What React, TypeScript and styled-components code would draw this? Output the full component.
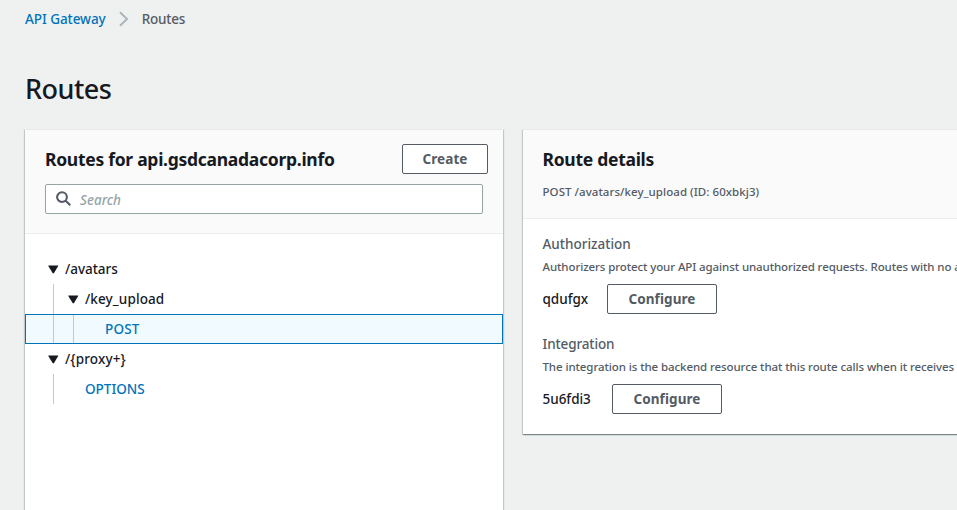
import React from "react";
import styled, { createGlobalStyle } from "styled-components";

const GlobalStyle = createGlobalStyle`
  *, *::before, *::after { box-sizing: border-box; }
  html, body { margin: 0; height: 100%; overflow: hidden; }
  body {
    background: #eff1f1;
    color: #16191f;
    font-family: "Noto Sans", "Open Sans", sans-serif;
    font-size: 13.5px;
    font-weight: 500;
    line-height: 20px;
  }
`;

const Page = styled.div`
  width: 957px;
  height: 510px;
  overflow: hidden;
  padding: 9px 0 0 25px;
  white-space: nowrap;
`;

const Breadcrumbs = styled.nav`
  display: flex;
  align-items: center;
  height: 20px;
`;

const Crumb = styled.a<{ $current?: boolean }>`
  color: ${(p) => (p.$current ? "#545b64" : "#0073bb")};
  letter-spacing: ${(p) => (p.$current ? "-0.22px" : "-0.06px")};
`;

const Separator = styled.svg`
  width: 10px;
  height: 16px;
  margin: 0 13px 0 13px;
`;

const PageTitle = styled.h1`
  margin: 42px 0 0;
  height: 35px;
  font-size: 27px;
  line-height: 36px;
  font-weight: 500;
  letter-spacing: -0.5px;
`;

const Columns = styled.div`
  display: flex;
  gap: 20px;
  margin-top: 23px;
  align-items: flex-start;
`;

const Card = styled.section<{ $tall?: boolean }>`
  flex: none;
  width: ${(p) => (p.$tall ? "478px" : "480px")};
  height: ${(p) => (p.$tall ? "420px" : "305px")};
  background: #fff;
  border-top: 1px solid #e6eaea;
  box-shadow: 0 1px 1px 0 rgba(0, 28, 36, 0.3), 1px 1px 1px 0 rgba(0, 28, 36, 0.15),
    -1px 1px 1px 0 rgba(0, 28, 36, 0.15);
`;

const CardHeader = styled.header<{ $height: number; $inset: number }>`
  height: ${(p) => p.$height}px;
  padding: 14px 15px 0 ${(p) => p.$inset}px;
  background: #fafafa;
  border-bottom: 1px solid #eaeded;
`;

const HeaderRow = styled.div`
  display: flex;
  align-items: center;
  justify-content: space-between;
  height: 30px;
`;

const CardTitle = styled.h2`
  margin: 0;
  font-size: 17.5px;
  line-height: 22px;
  font-weight: 700;
  letter-spacing: -0.28px;
`;

const Subtitle = styled.p`
  margin: 10px 0 0;
  color: #545b64;
  font-size: 11.5px;
  font-weight: 500;
  line-height: 16px;
  letter-spacing: 0.05px;
`;

const Button = styled.button<{ $width: number }>`
  width: ${(p) => p.$width}px;
  height: 30px;
  padding: 0;
  border: 1px solid #545b64;
  border-radius: 2px;
  background: #fff;
  color: #545b64;
  font: 700 13.5px/20px "Noto Sans", "Open Sans", sans-serif;
  letter-spacing: 0.08px;
`;

const SearchBox = styled.label`
  display: flex;
  align-items: center;
  width: 438px;
  height: 30px;
  margin-top: 10px;
  padding-left: 10px;
  border: 1px solid #95a5a6;
  border-radius: 2px;
  background: #fff;
`;

const SearchIcon = styled.svg`
  width: 16px;
  height: 16px;
`;

const SearchInput = styled.input`
  flex: 1;
  min-width: 0;
  margin: 1px 0 0 8px;
  padding: 0;
  border: 0;
  outline: 0;
  background: transparent;
  font: italic 500 13.5px/20px "Noto Sans", "Open Sans", sans-serif;
  letter-spacing: 0;
  &::placeholder { color: #95a5a6; opacity: 1; }
`;

const Tree = styled.ul`
  margin: 20px 0 0;
  padding: 0;
  list-style: none;
`;

const TreeRow = styled.li<{ $selected?: boolean }>`
  display: flex;
  align-items: center;
  height: 30px;
  padding-left: ${(p) => (p.$selected ? "7px" : "8px")};
  border: ${(p) => (p.$selected ? "1px solid #0073bb" : "0")};
  background: ${(p) => (p.$selected ? "#f1faff" : "transparent")};
`;

const Guides = styled.span<{ $depth: number }>`
  display: flex;
  align-self: stretch;
  width: ${(p) => p.$depth * 20}px;
  margin-left: 20px;
  margin-right: -20px;
`;

const Guide = styled.span`
  width: 20px;
  border-left: 1px solid #c8c8c8;
`;

const LeafSpacer = styled.span`
  width: 32px;
`;

const Caret = styled.svg`
  width: 11px;
  height: 9px;
  margin: 0 6px 0 15px;
`;

const RouteName = styled.span<{ $track: number; $link?: boolean }>`
  color: ${(p) => (p.$link ? "#0073bb" : "#16191f")};
  letter-spacing: ${(p) => p.$track}px;
`;

const Details = styled.div`
  display: flex;
  flex-direction: column;
  gap: 20px;
  padding: 15px 0 0 19.5px;
`;

const FieldLabel = styled.div<{ $track: number }>`
  height: 20px;
  color: #545b64;
  letter-spacing: ${(p) => p.$track}px;
`;

const FieldHint = styled.div<{ $track: number }>`
  height: 16px;
  margin-top: 5px;
  color: #545b64;
  font-size: 11.5px;
  font-weight: 500;
  line-height: 16px;
  letter-spacing: ${(p) => p.$track}px;
`;

const FieldValue = styled.div<{ $textWidth: number }>`
  display: grid;
  grid-template-columns: ${(p) => p.$textWidth}px auto;
  justify-content: start;
  align-items: center;
  column-gap: 20px;
  height: 30px;
  margin-top: 9px;
  letter-spacing: -0.02px;
`;

type Route = { name: string; depth: number; branch: boolean; selected?: boolean; track: number };

const routes: Route[] = [
  { name: "/avatars", depth: 0, branch: true, track: -0.02 },
  { name: "/key_upload", depth: 1, branch: true, track: 0.12 },
  { name: "POST", depth: 2, branch: false, selected: true, track: 0.2 },
  { name: "/{proxy+}", depth: 0, branch: true, track: 0.15 },
  { name: "OPTIONS", depth: 1, branch: false, track: 0.02 },
];

const fields = [
  {
    label: "Authorization",
    labelTrack: 0,
    hint: "Authorizers protect your API against unauthorized requests. Routes with no a",
    hintTrack: -0.1,
    value: "qdufgx",
    valueWidth: 44.5,
  },
  {
    label: "Integration",
    labelTrack: -0.12,
    hint: "The integration is the backend resource that this route calls when it receives",
    hintTrack: -0.09,
    value: "5u6fdi3",
    valueWidth: 49.5,
  },
];

export default function App() {
  return (
    <Page>
      <GlobalStyle />
      <Breadcrumbs>
        <Crumb>API Gateway</Crumb>
        <Separator viewBox="0 0 10 16" fill="none" stroke="#aab7b8" strokeWidth="2">
          <path d="M1 1.2 8 8 1 14.8" />
        </Separator>
        <Crumb $current>Routes</Crumb>
      </Breadcrumbs>
      <PageTitle>Routes</PageTitle>
      <Columns>
        <Card $tall>
          <CardHeader $height={104} $inset={20}>
            <HeaderRow>
              <CardTitle>Routes for api.gsdcanadacorp.info</CardTitle>
              <Button $width={86}>Create</Button>
            </HeaderRow>
            <SearchBox>
              <SearchIcon viewBox="0 0 16 16" fill="none" stroke="#545b64" strokeWidth="2.1">
                <circle cx="6" cy="6.1" r="4.9" />
                <path d="m9.6 9.8 4.7 4.5" />
              </SearchIcon>
              <SearchInput placeholder="Search" />
            </SearchBox>
          </CardHeader>
          <Tree>
            {routes.map((r) => (
              <TreeRow key={r.name} $selected={r.selected}>
                <Guides $depth={r.depth}>
                  {Array.from({ length: r.depth }, (_, i) => (
                    <Guide key={i} />
                  ))}
                </Guides>
                {r.branch ? (
                  <Caret viewBox="0 0 11 9" fill="#16191f">
                    <path d="M.6.5h9.3q.6 0 .3.6L6 8q-.7.8-1.4 0L.3 1.1Q0 .5.6.5Z" />
                  </Caret>
                ) : (
                  <LeafSpacer />
                )}
                <RouteName $track={r.track} $link={!r.branch}>
                  {r.name}
                </RouteName>
              </TreeRow>
            ))}
          </Tree>
        </Card>
        <Card>
          <CardHeader $height={89} $inset={19.5}>
            <HeaderRow>
              <CardTitle>Route details</CardTitle>
            </HeaderRow>
            <Subtitle>POST /avatars/key_upload (ID: 60xbkj3)</Subtitle>
          </CardHeader>
          <Details>
            {fields.map((f) => (
              <div key={f.label}>
                <FieldLabel $track={f.labelTrack}>{f.label}</FieldLabel>
                <FieldHint $track={f.hintTrack}>{f.hint}</FieldHint>
                <FieldValue $textWidth={f.valueWidth}>
                  {f.value}
                  <Button $width={110}>Configure</Button>
                </FieldValue>
              </div>
            ))}
          </Details>
        </Card>
      </Columns>
    </Page>
  );
}
